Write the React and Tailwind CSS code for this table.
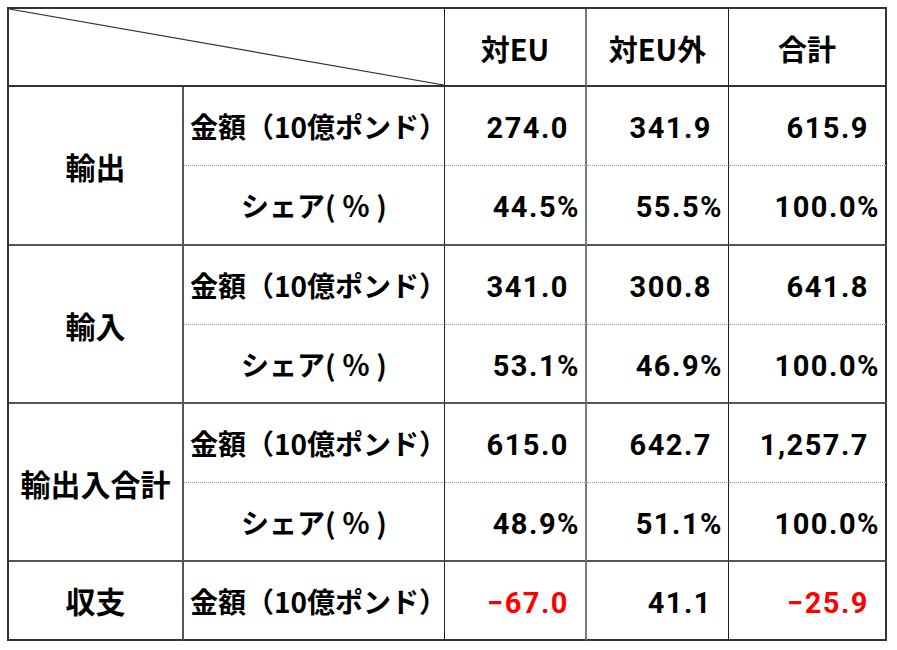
import React from 'react';

const jp = "font-['Noto_Sans_CJK_JP',sans-serif] font-bold";
const num = "font-['Roboto','Liberation_Sans',sans-serif] font-bold text-[29px] tracking-[1.5px]";

const groups = [
  {
    name: '輸出',
    amount: ['274.0', '341.9', '615.9'],
    share: ['44.5%', '55.5%', '100.0%'],
  },
  {
    name: '輸入',
    amount: ['341.0', '300.8', '641.8'],
    share: ['53.1%', '46.9%', '100.0%'],
  },
  {
    name: '輸出入合計',
    amount: ['615.0', '642.7', '1,257.7'],
    share: ['48.9%', '51.1%', '100.0%'],
  },
];

const colBorder = [
  'border-r border-r-[#222]',
  'border-r-2 border-r-[#7a7a7a]',
  'border-r border-r-[#222]',
  'border-r-2 border-r-[#333]',
];

const AmountLabel = ({ last }) => (
  <div
    className={`flex items-center justify-center pl-[6px] border-r border-r-[#222] ${jp} text-[28px] ${
      last ? 'border-b-2 border-b-[#333]' : 'border-b border-b-[#9a9a9a] [border-bottom-style:dotted]'
    }`}
  >
    金額（10億ポンド）
  </div>
);

const App = () => {
  return (
    <div className="w-[897px] h-[650px] bg-white pt-[7px] pl-[7px]">
      <div className="grid grid-cols-[175px_261px_142px_142px_158px] grid-rows-[78px_79px_80px_79px_79px_79px_79px_79px] w-[880px] border-t-2 border-l-2 border-[#333] text-black">
        {/* header */}
        <div className="col-span-2 relative border-r border-r-[#222] border-b-2 border-b-[#333]">
          <svg className="absolute inset-0 w-full h-full" preserveAspectRatio="none">
            <line x1="0" y1="0" x2="100%" y2="100%" stroke="#333" strokeWidth="1.2" />
          </svg>
        </div>
        {['対EU', '対EU外', '合計'].map((h, i) => (
          <div
            key={h}
            className={`flex items-center justify-center pt-[4px] border-b-2 border-b-[#333] ${colBorder[i + 1]} ${jp} text-[29px]`}
          >
            {h}
          </div>
        ))}

        {groups.map((g) => (
          <React.Fragment key={g.name}>
            <div className={`row-span-2 flex items-center justify-center pt-[2px] border-r-2 border-r-[#555] border-b-2 border-b-[#555] ${jp} text-[30px]`}>
              {g.name}
            </div>
            <AmountLabel />
            {g.amount.map((v, i) => (
              <div
                key={i}
                className={`flex items-center justify-end pr-[16px] pt-[6px] border-b border-b-[#9a9a9a] [border-bottom-style:dotted] ${colBorder[i + 1]} ${num}`}
              >
                {v}
              </div>
            ))}
            <div className={`flex items-center justify-center border-r border-r-[#222] border-b-2 border-b-[#555] ${jp} text-[28px]`}>
              シェア( ％ )
            </div>
            {g.share.map((v, i) => (
              <div
                key={i}
                className={`flex items-center justify-end pr-[5px] pt-[6px] border-b-2 border-b-[#555] ${colBorder[i + 1]} ${num}`}
              >
                {v}
              </div>
            ))}
          </React.Fragment>
        ))}

        {/* balance */}
        <div className={`flex items-center justify-center border-r-2 border-r-[#555] border-b-2 border-b-[#333] ${jp} text-[30px]`}>
          収支
        </div>
        <AmountLabel last />
        {[
          ['−67.0', 'text-[#ff0000]'],
          ['41.1', 'text-black'],
          ['−25.9', 'text-[#ff0000]'],
        ].map(([v, c], i) => (
          <div
            key={i}
            className={`flex items-center justify-end pr-[16px] pt-[6px] border-b-2 border-b-[#333] ${colBorder[i + 1]} ${num} ${c}`}
          >
            {v}
          </div>
        ))}
      </div>
    </div>
  );
};

export default App;
